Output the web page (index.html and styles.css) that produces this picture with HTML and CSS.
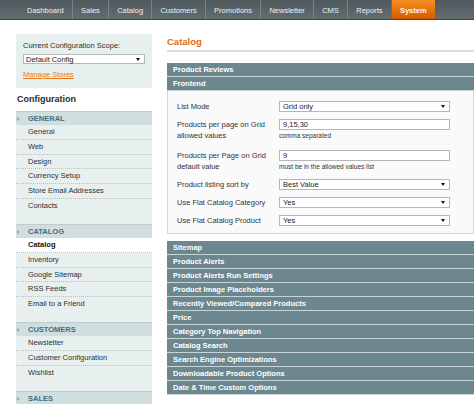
FILE: index.html
```html
<!DOCTYPE html>
<html>
<head>
<meta charset="utf-8">
<link rel="stylesheet" href="styles.css">
</head>
<body>
<nav class="nav">
  <a class="tab">Dashboard</a>
  <a class="tab">Sales</a>
  <a class="tab">Catalog</a>
  <a class="tab">Customers</a>
  <a class="tab">Promotions</a>
  <a class="tab">Newsletter</a>
  <a class="tab">CMS</a>
  <a class="tab">Reports</a>
  <a class="tab active">System</a>
</nav>
<div class="page">
  <aside class="side">
    <div class="scope">
      <div class="scope-label">Current Configuration Scope:</div>
      <div class="sel sel-side"><span>Default Config</span><span class="arr"></span></div>
      <a class="manage">Manage Stores</a>
    </div>
    <h3 class="side-title">Configuration</h3>
    <div class="group">
      <div class="ghead">GENERAL</div>
      <ul class="items">
        <li>General</li>
        <li>Web</li>
        <li>Design</li>
        <li>Currency Setup</li>
        <li>Store Email Addresses</li>
        <li>Contacts</li>
      </ul>
    </div>
    <div class="group">
      <div class="ghead">CATALOG</div>
      <ul class="items">
        <li class="on">Catalog</li>
        <li>Inventory</li>
        <li>Google Sitemap</li>
        <li>RSS Feeds</li>
        <li>Email to a Friend</li>
      </ul>
    </div>
    <div class="group">
      <div class="ghead">CUSTOMERS</div>
      <ul class="items">
        <li>Newsletter</li>
        <li>Customer Configuration</li>
        <li>Wishlist</li>
      </ul>
    </div>
    <div class="group">
      <div class="ghead">SALES</div>
    </div>
  </aside>
  <main class="main">
    <h2 class="title">Catalog</h2>
    <div class="sec">Product Reviews</div>
    <div class="sec">Frontend</div>
    <div class="form">
      <div class="row">
        <label>List Mode</label>
        <div class="val"><div class="sel"><span>Grid only</span><span class="arr"></span></div></div>
      </div>
      <div class="row tall">
        <label>Products per page on Grid allowed values</label>
        <div class="val"><div class="inp">9,15,30</div><div class="note">comma separated</div></div>
      </div>
      <div class="row">
        <label>Products per Page on Grid default value</label>
        <div class="val"><div class="inp">9</div><div class="note">must be in the allowed values list</div></div>
      </div>
      <div class="row">
        <label>Product listing sort by</label>
        <div class="val"><div class="sel"><span>Best Value</span><span class="arr"></span></div></div>
      </div>
      <div class="row">
        <label>Use Flat Catalog Category</label>
        <div class="val"><div class="sel"><span>Yes</span><span class="arr"></span></div></div>
      </div>
      <div class="row">
        <label>Use Flat Catalog Product</label>
        <div class="val"><div class="sel"><span>Yes</span><span class="arr"></span></div></div>
      </div>
    </div>
    <div class="sec">Sitemap</div>
    <div class="sec">Product Alerts</div>
    <div class="sec">Product Alerts Run Settings</div>
    <div class="sec">Product Image Placeholders</div>
    <div class="sec">Recently Viewed/Compared Products</div>
    <div class="sec">Price</div>
    <div class="sec">Category Top Navigation</div>
    <div class="sec">Catalog Search</div>
    <div class="sec">Search Engine Optimizations</div>
    <div class="sec">Downloadable Product Options</div>
    <div class="sec">Date &amp; Time Custom Options</div>
  </main>
</div>
</body>
</html>
```
FILE: styles.css
```css
* { box-sizing: border-box; margin: 0; padding: 0; }
html, body { background: #fff; }
body {
  font-family: "Liberation Sans", Arial, sans-serif;
  font-size: 7.5px;
  color: #2f2f2f;
  width: 474px;
  height: 404px;
  overflow: hidden;
}

/* top navigation */
.nav {
  display: flex;
  height: 20px;
  padding-left: 18.8px;
  background: linear-gradient(#4f585d, #646d72);
  border-bottom: 1px solid #3d4448;
}
.tab {
  padding: 2px 8.2px 0;
  line-height: 17px;
  color: #f0f0f0;
  text-decoration: none;
  border-left: 1px solid #7b8489;
  white-space: nowrap;
}
.tab:first-child { border-left: none; }
.tab.active {
  background: linear-gradient(#f39020, #d65b00);
  color: #fff8e8;
  font-weight: bold;
  border-left: 1px solid #6c7378;
}

/* page */
.page {
  display: flex;
  align-items: flex-start;
  gap: 15px;
  padding: 14px 0 0 16px;
}

/* sidebar */
.side { width: 136px; flex: none; }
.scope {
  background: #e7efef;
  padding: 7px 7px 8px;
}
.scope-label { line-height: 10px; }
.sel, .inp {
  display: flex;
  align-items: center;
  justify-content: space-between;
  background: #fff;
  border: 1px solid #b3b7b8;
  height: 11px;
  line-height: 9px;
  padding: 0 4px 0 3px;
  color: #222;
}
.sel-side { height: 10px; margin-top: 3px; padding-left: 2px; }
.arr {
  width: 0;
  height: 0;
  border-left: 2px solid transparent;
  border-right: 2px solid transparent;
  border-top: 3px solid #111;
}
.manage {
  display: block;
  margin-top: 6px;
  line-height: 10px;
  color: #e9790f;
  text-decoration: underline;
}
.side-title {
  font-size: 9px;
  font-weight: bold;
  line-height: 23px;
  padding-left: 1px;
  color: #2b2b2b;
  background: #fff;
}
.group {
  background: #e7efef;
  padding-bottom: 10.5px;
}
.ghead {
  display: flex;
  align-items: center;
  height: 14px;
  padding-left: 1px;
  background: #d1dedf;
  border-top: 1px solid #c0cdd0;
  color: #3f6f87;
  font-weight: bold;
}
.ghead::before {
  content: "";
  border-left: 3px solid #9aa8ac;
  border-top: 2.5px solid transparent;
  border-bottom: 2.5px solid transparent;
  margin-right: 8px;
}
.items { list-style: none; }
.items li {
  height: 14.75px;
  line-height: 14px;
  padding-left: 12px;
  border-bottom: 1px dotted #b7c3c5;
}
.items li:last-child { border-bottom: none; }
.items li.on {
  background: #fff;
  font-weight: bold;
  color: #111;
}

/* main */
.main { flex: 1; min-width: 0; }
.title {
  font-size: 9.5px;
  line-height: 16px;
  color: #e36a0e;
  border-bottom: 2px solid #dddddd;
  margin-bottom: 11px;
}
.sec {
  height: 14px;
  line-height: 13px;
  padding-left: 6px;
  background: #6d878f;
  color: #fff;
  font-weight: bold;
  border-bottom: 1px solid #c5d4d8;
  white-space: nowrap;
}
.form {
  background: #fafafa;
  border: 1px solid #d6d6d6;
  border-top: none;
  padding: 10px 0 7px 9px;
  margin-bottom: 7px;
}
.row {
  display: grid;
  grid-template-columns: 102px 171px;
  margin-bottom: 7px;
}
.row.tall { margin-bottom: 9px; }
.row:last-child { margin-bottom: 0; }
.row label { line-height: 11px; color: #333; }
.note { font-size: 6.5px; line-height: 11px; color: #333; }
```
